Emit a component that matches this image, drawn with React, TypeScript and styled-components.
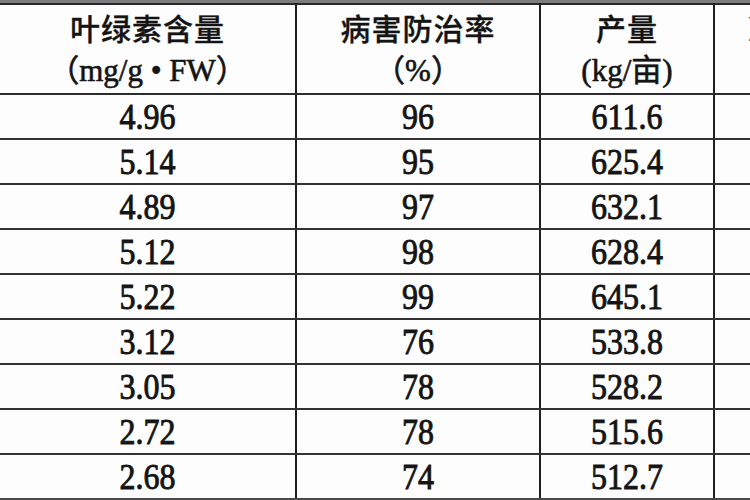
import React from 'react';
import styled, { createGlobalStyle } from 'styled-components';

const GlobalStyle = createGlobalStyle`
  html, body {
    margin: 0;
    padding: 0;
    background: #fdfdfd;
    overflow: hidden;
  }
`;

const Sheet = styled.div`
  width: 750px;
  height: 500px;
  overflow: hidden;
  background: #fdfdfd;
  border-top: 3px solid #7c7c7c;
  box-sizing: border-box;
`;

const Table = styled.table`
  border-collapse: collapse;
  table-layout: fixed;
  width: 874px;
  color: #141414;
  font-family: 'Liberation Serif', 'Noto Sans CJK SC', serif;
  border-top: 2px solid #2a2a2a;
  border-bottom: 6px solid #4a4a4a;
`;

const Col = styled.col<{ w: number }>`
  width: ${p => p.w}px;
`;

const HeadCell = styled.th`
  height: 86px;
  padding: 0;
  font-weight: 400;
  font-size: 30px;
  line-height: 44px;
  text-align: center;
  vertical-align: middle;
  border-left: 2px solid #1e1e1e;
  border-bottom: 2px solid #2c2c2c;
  white-space: nowrap;
  &:first-child {
    border-left: none;
  }
`;

const HeadLine = styled.div<{ cjk?: boolean }>`
  height: 44px;
  font-family: ${p => p.cjk
    ? "'Noto Sans CJK SC', sans-serif"
    : "'Liberation Serif', 'Noto Sans CJK SC', serif"};
  font-size: ${p => p.cjk ? '30px' : '31px'};
  font-weight: ${p => p.cjk ? 500 : 400};
  letter-spacing: ${p => p.cjk ? '1px' : '0'};
  -webkit-text-stroke: ${p => p.cjk ? '0.3px' : '0.6px'} #141414;
`;

const Cell = styled.td`
  height: 43px;
  padding: 0;
  text-align: center;
  vertical-align: middle;
  font-size: 32px;
  line-height: 43px;
  border-left: 2px solid #1e1e1e;
  border-bottom: 2px solid #333;
  &:first-child {
    border-left: none;
  }
`;

const Num = styled.span`
  display: inline-block;
  transform: scaleY(1.15);
  -webkit-text-stroke: 0.8px #141414;
`;

const rows: [string, string, string][] = [
  ['4.96', '96', '611.6'],
  ['5.14', '95', '625.4'],
  ['4.89', '97', '632.1'],
  ['5.12', '98', '628.4'],
  ['5.22', '99', '645.1'],
  ['3.12', '76', '533.8'],
  ['3.05', '78', '528.2'],
  ['2.72', '78', '515.6'],
  ['2.68', '74', '512.7'],
];

const App: React.FC = () => {
  return (
    <>
      <GlobalStyle />
      <Sheet>
        <Table>
          <colgroup>
            <Col w={296} />
            <Col w={244} />
            <Col w={174} />
            <Col w={160} />
          </colgroup>
          <thead>
            <tr>
              <HeadCell>
                <HeadLine cjk>叶绿素含量</HeadLine>
                <HeadLine>（mg/g • FW）</HeadLine>
              </HeadCell>
              <HeadCell>
                <HeadLine cjk>病害防治率</HeadLine>
                <HeadLine>（%）</HeadLine>
              </HeadCell>
              <HeadCell>
                <HeadLine cjk>产量</HeadLine>
                <HeadLine>(kg/亩)</HeadLine>
              </HeadCell>
              <HeadCell>
                <HeadLine cjk>净收益</HeadLine>
                <HeadLine />
              </HeadCell>
            </tr>
          </thead>
          <tbody>
            {rows.map(r => (
              <tr key={r[0] + r[2]}>
                <Cell><Num>{r[0]}</Num></Cell>
                <Cell><Num>{r[1]}</Num></Cell>
                <Cell><Num>{r[2]}</Num></Cell>
                <Cell />
              </tr>
            ))}
          </tbody>
        </Table>
      </Sheet>
    </>
  );
};

export default App;
